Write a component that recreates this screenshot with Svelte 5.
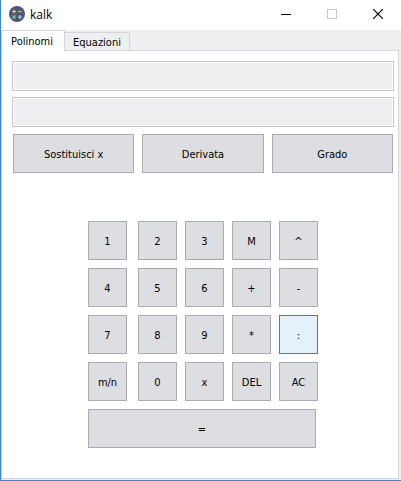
<script>
  const tabs = ['Polinomi', 'Equazioni'];
  const actions = ['Sostituisci x', 'Derivata', 'Grado'];
  const keys = [
    '1', '2', '3', 'M', '^',
    '4', '5', '6', '+', '-',
    '7', '8', '9', '*', ':',
    'm/n', '0', 'x', 'DEL', 'AC'
  ];
  let active = $state('Polinomi');
  let current = $state(':');
</script>

<div class="window">
  <header class="titlebar">
    <svg class="logo" width="16" height="16" viewBox="0 0 16 16" aria-hidden="true">
      <circle cx="8" cy="8" r="8" fill="#4c5873" />
      <path d="M3 5.5h4M5 3.5v4" stroke="#e8c99a" stroke-width="1.2" />
      <path d="M9 5.5h4" stroke="#d3a874" stroke-width="1.2" />
      <path d="M3.3 9.3l3.4 3.4M6.7 9.3l-3.4 3.4" stroke="#78c4bd" stroke-width="1.2" />
      <path d="M9 11h4M11 9v4" stroke="#c3cad6" stroke-width="1.2" />
    </svg>
    <h1>kalk</h1>
    <div class="controls">
      <button aria-label="Minimize">
        <svg width="10" height="10" shape-rendering="crispEdges"><path d="M0 5.5h10" stroke="#000" /></svg>
      </button>
      <button aria-label="Maximize" disabled>
        <svg width="10" height="10" shape-rendering="crispEdges"><rect x=".5" y=".5" width="9" height="9" fill="none" stroke="#c6c7cd" /></svg>
      </button>
      <button aria-label="Close">
        <svg width="10" height="10"><path d="M0 0l10 10M10 0L0 10" stroke="#000" stroke-width="1.2" /></svg>
      </button>
    </div>
  </header>

  <div class="tabs" role="tablist">
    {#each tabs as tab}
      <button role="tab" class:active={active === tab} aria-selected={active === tab} onclick={() => (active = tab)}>{tab}</button>
    {/each}
  </div>

  <main>
    <div class="fields">
      <input type="text" aria-label="Polinomio" readonly />
      <input type="text" aria-label="Risultato" readonly />
    </div>
    <div class="actions">
      {#each actions as action}
        <button class="key">{action}</button>
      {/each}
    </div>
    <div class="pad">
      {#each keys as key}
        <button class="key" class:current={current === key} onmouseenter={() => (current = key)}>{key}</button>
      {/each}
      <button class="key equals">=</button>
    </div>
  </main>
</div>

<style>
  :global(body) {
    margin: 0;
    background: #eeeff1;
  }
  .window {
    box-sizing: border-box;
    min-height: 100vh;
    display: flex;
    flex-direction: column;
    border-left: 1px solid #4383d9;
    border-bottom: 1px solid #4383d9;
    background: #eeeff1;
    color: #000;
    font-family: "DejaVu Sans Condensed", "Noto Sans", sans-serif;
    font-size: 11px;
  }
  button {
    box-sizing: border-box;
    margin: 0;
    padding: 0;
    border: 0;
    border-radius: 0;
    background: none;
    color: inherit;
    font: inherit;
  }
  .titlebar {
    display: flex;
    align-items: center;
    height: 30px;
    padding-left: 8px;
    background: #fff;
  }
  .logo {
    display: block;
    margin-bottom: 2px;
  }
  h1 {
    flex: 1;
    margin: 0 0 0 5px;
    font: 400 12px/16px "Open Sans", sans-serif;
  }
  .controls {
    display: flex;
    height: 28px;
    align-self: flex-start;
  }
  .controls button {
    width: 46px;
    display: grid;
    place-items: center;
  }
  .controls svg {
    display: block;
  }
  .tabs {
    display: flex;
    align-items: flex-end;
    height: 21px;
    margin-right: 2px;
    box-shadow: inset 0 -1px #d5d6dc;
  }
  .tabs button {
    width: 65px;
    height: 19px;
    padding-top: 2px;
    border: 1px solid #d5d6dc;
    border-left: 0;
    line-height: 16px;
  }
  .tabs .active {
    width: 64px;
    height: 21px;
    padding-right: 2px;
    border-left: 1px solid #d5d6dc;
    border-bottom: 0;
    background: #fff;
  }
  main {
    flex: 1;
    margin: 0 2px 1px 0;
    padding: 10px 4px 28px 10px;
    border: 1px solid #d5d6dc;
    border-top: 0;
    background: #fff;
  }
  .fields {
    display: grid;
    gap: 6px;
  }
  input {
    box-sizing: border-box;
    width: 100%;
    height: 30px;
    padding: 0 4px;
    border: 1px solid #c6c7cd;
    border-radius: 0;
    outline: 0;
    background: #eeeff1;
    box-shadow: inset 0 0 0 1px #fff;
    font: inherit;
  }
  .key {
    height: 39px;
    padding: 2px 0 0;
    border: 1px solid #a9acb4;
    background: #dddee2;
    line-height: 16px;
  }
  .current {
    border-color: #3e7bd6;
    background: #e4f1fb;
  }
  .actions {
    display: grid;
    grid-template-columns: repeat(3, 1fr);
    gap: 8px;
    margin: 7px 1px 48px;
  }
  .pad {
    display: grid;
    grid-template-columns: 42px repeat(4, 39px);
    justify-content: center;
    gap: 8px;
  }
  .pad .key:nth-child(5n + 1) {
    width: 39px;
  }
  .pad .equals.key {
    grid-column: 1 / -1;
    width: auto;
    margin-right: 2px;
  }
</style>
